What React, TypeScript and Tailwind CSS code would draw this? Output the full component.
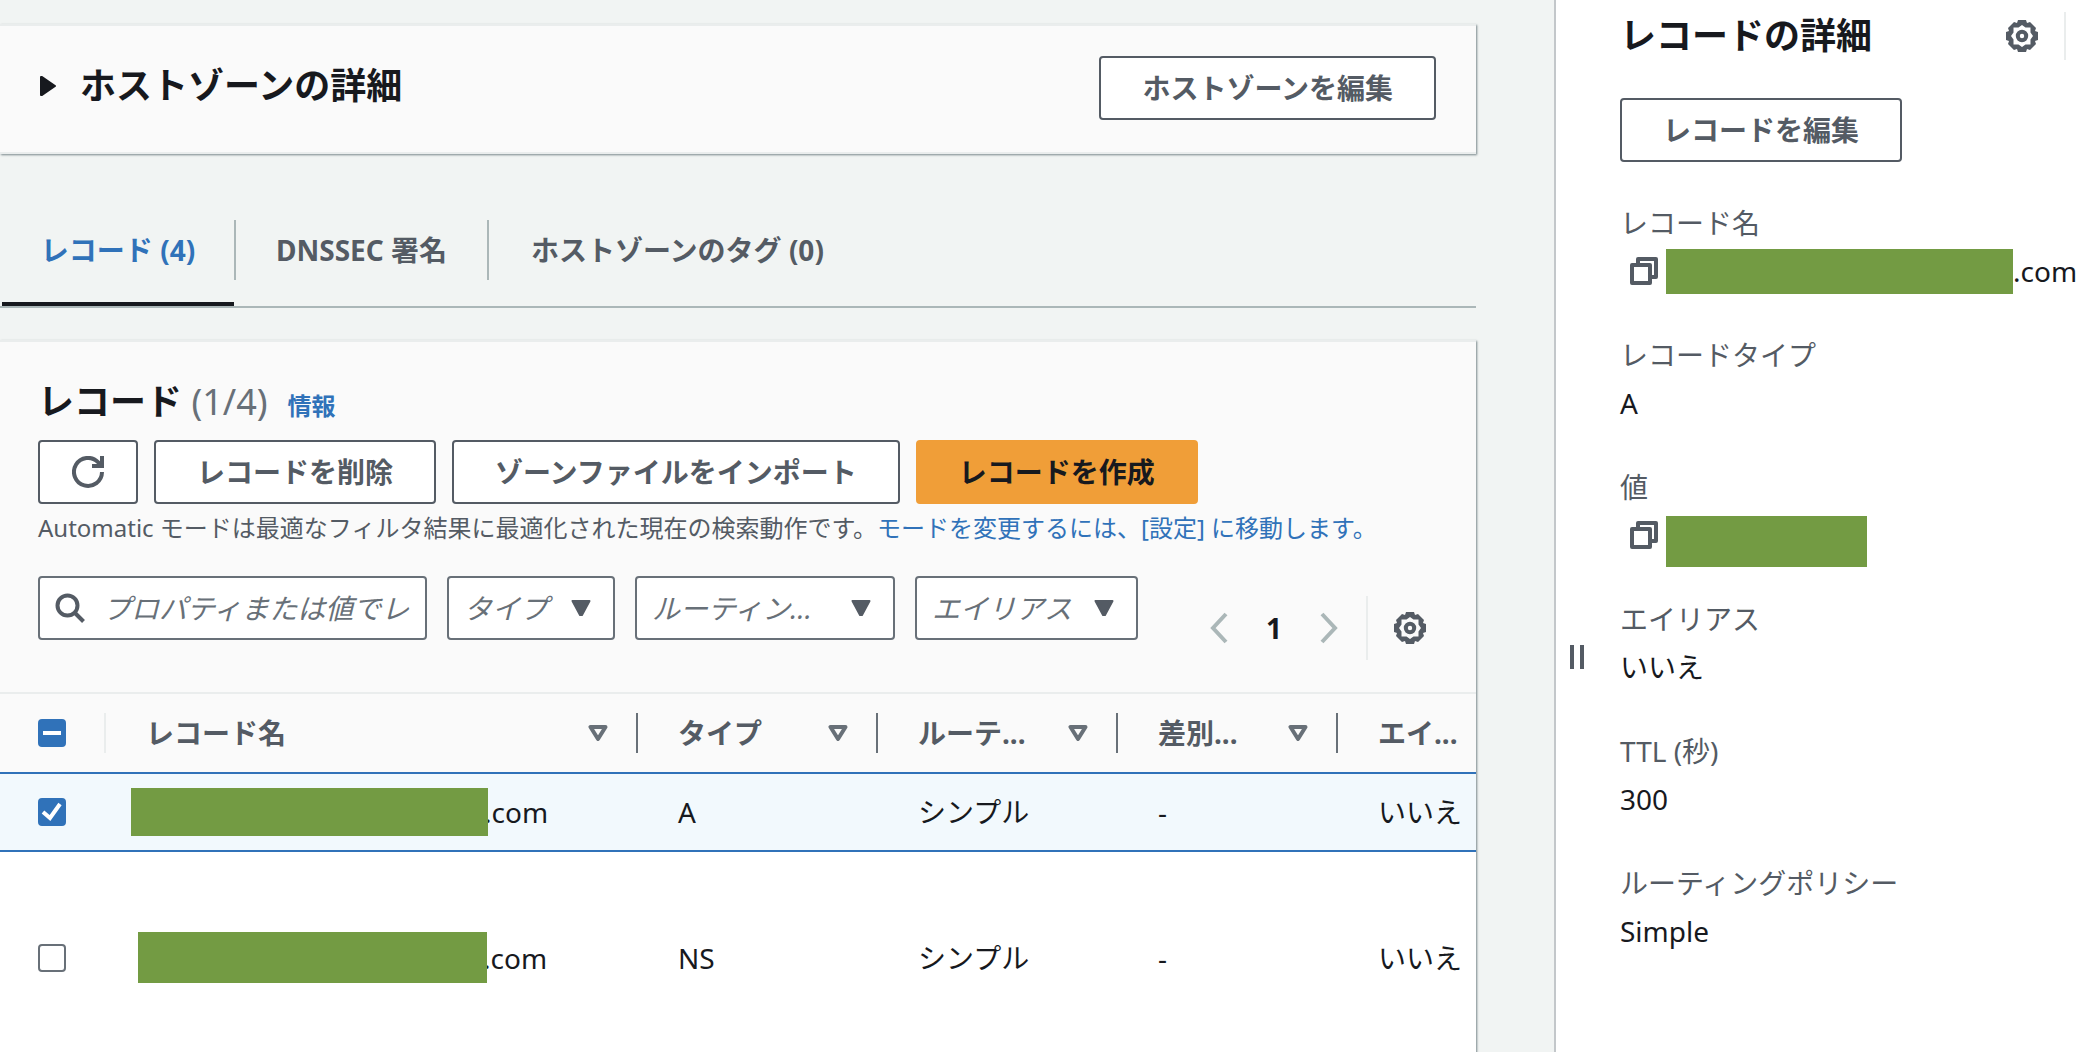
import type { ReactNode } from "react";

const font = "font-['Noto_Sans','Noto_Sans_CJK_JP',sans-serif]";

function Gear() {
  return (
    <svg viewBox="0 0 32 32" className="size-8" fill="#545b64">
      <path
        fillRule="evenodd"
        d="M12 0h8l1 3 3-1 6 6-1 3 3 1v8l-3 1 1 3-6 6-3-1-1 3h-8l-1-3-3 1-6-6 1-3-3-1v-8l3-1-1-3 6-6 3 1zM16 5l-3.500 2.500-5 0 0 5L5 16l2.500 3.500 0 5 5 0L16 27l3.500-2.500 5 0 0-5L27 16l-2.500-3.500 0-5-5 0z"
      />
      <circle cx="16" cy="16" r="4.200" fill="none" stroke="#545b64" strokeWidth="4" />
    </svg>
  );
}

function Caret() {
  return (
    <svg viewBox="0 0 20 16" className="h-4 w-5" fill="#545b64" stroke="#545b64" strokeWidth="2" strokeLinejoin="round">
      <path d="M1.500 1h17l-7.500 14h-2z" />
    </svg>
  );
}

function SortIcon() {
  return (
    <svg viewBox="0 0 20 16" className="h-4 w-5" fill="none" stroke="#687078" strokeWidth="4" strokeLinejoin="round">
      <path d="M2.500 2h15l-7.500 12z" />
    </svg>
  );
}

function CopyIcon() {
  return (
    <svg viewBox="0 0 28 28" className="size-7" fill="none" stroke="#545b64" strokeWidth="4" strokeLinejoin="round">
      <path d="M2 8h18v18H2z" />
      <path d="M8 8V2h18v18h-6" />
    </svg>
  );
}

function Button({ children, primary }: { children: ReactNode; primary?: boolean }) {
  return (
    <button
      type="button"
      className={
        primary
          ? "h-16 shrink-0 whitespace-nowrap rounded-[4px] border-2 border-[#f09e38] bg-[#f09e38] px-[41px] text-[28px] font-bold text-[#17191e]"
          : "h-16 shrink-0 whitespace-nowrap rounded-[4px] border-2 border-[#545b64] bg-white px-[41px] text-[28px] font-bold text-[#545b64]"
      }
    >
      {children}
    </button>
  );
}

function Filter({ label, width }: { label: string; width: string }) {
  return (
    <div className={`relative shrink-0 ${width}`}>
      <select
        aria-label={label}
        className="h-16 w-full appearance-none rounded-[4px] border-2 border-[#687078] bg-white pl-[15px] text-[28px] italic text-[#687078]"
      >
        <option>{label}</option>
      </select>
      <span className="pointer-events-none absolute inset-y-0 right-6 flex items-center">
        <Caret />
      </span>
    </div>
  );
}

function Check({ label, checked, mixed }: { label: string; checked?: boolean; mixed?: boolean }) {
  return (
    <span className="relative flex size-7">
      <input
        type="checkbox"
        aria-label={label}
        defaultChecked={checked}
        className="size-7 appearance-none rounded-[4px] border-2 border-[#687078] bg-white checked:border-[#3072b9] checked:bg-[#3072b9]"
      />
      {checked && (
        <svg viewBox="0 0 28 28" className="pointer-events-none absolute inset-0" fill="none" stroke="white" strokeWidth="4">
          <path d={mixed ? "M5 14h18" : "M5 14l7 6L22 6"} />
        </svg>
      )}
    </span>
  );
}

function HeaderCell({ label, last }: { label: string; last?: boolean }) {
  return (
    <th scope="col" className="h-20 p-0 font-bold">
      <div
        className={
          last
            ? "flex h-10 items-center pl-10"
            : "flex h-10 items-center justify-between border-r-2 border-[#687078] pr-7 pl-10"
        }
      >
        <span className="whitespace-nowrap">{label}</span>
        {!last && (
          <button type="button" aria-label={`${label} で並べ替え`}>
            <SortIcon />
          </button>
        )}
      </div>
    </th>
  );
}

function Field({ label, children }: { label: string; children: ReactNode }) {
  return (
    <div className="flex flex-col gap-1">
      <dt className="h-11 text-[28px] leading-[44px] text-[#545b64]">{label}</dt>
      <dd className="flex h-11 items-center text-[28px] leading-[44px]">{children}</dd>
    </div>
  );
}

function CopyButton() {
  return (
    <button type="button" aria-label="コピー" className="mr-2 ml-[10px] shrink-0">
      <CopyIcon />
    </button>
  );
}

const card = "border-y-2 border-[#eaeded] shadow-[1px_1px_2px_rgba(0,28,36,0.5)]";

export default function App() {
  return (
    <div className={`flex h-screen overflow-hidden bg-[#f1f4f3] text-[#17191e] ${font}`}>
      <main className="flex min-w-0 flex-1 flex-col overflow-hidden pt-6 pr-[78px]">
        <section className={`flex h-[130px] shrink-0 items-start justify-between bg-[#fafafa] pt-[30px] pr-10 pl-10 ${card}`}>
          <h2 className="text-[36px] leading-[60px] font-bold">
            <button type="button" className="flex items-center gap-6">
              <svg viewBox="0 0 16 20" className="h-5 w-4" fill="#17191e" stroke="#17191e" strokeWidth="2" strokeLinejoin="round">
                <path d="M1 1l1 0 13 9-13 9-1 0z" />
              </svg>
              ホストゾーンの詳細
            </button>
          </h2>
          <Button>ホストゾーンを編集</Button>
        </section>

        <div role="tablist" className="mt-[66px] flex h-[88px] shrink-0 border-b-2 border-[#abb7b8] pl-[2px] text-[28px] font-bold text-[#545b64]">
          <button type="button" role="tab" aria-selected="true" className="flex h-[86px] w-[232px] flex-col items-center border-b-4 border-[#17191e] text-[#3072b9]">
            <span className="leading-[60px]">レコード (4)</span>
          </button>
          <button type="button" role="tab" aria-selected="false" className="h-[60px] w-[255px] border-x-2 border-[#abb7b8]">
            DNSSEC 署名
          </button>
          <button type="button" role="tab" aria-selected="false" className="h-[60px] px-[42px]">
            ホストゾーンのタグ (0)
          </button>
        </div>

        <section className={`mt-8 flex flex-1 flex-col bg-white ${card}`}>
          <div className="shrink-0 bg-[#fafafa] px-[38px] pt-8">
            <div className="flex items-baseline">
              <h2 className="text-[36px] leading-[56px] font-bold">
                レコード <span className="font-normal text-[#687078]">(1/4)</span>
              </h2>
              <a href="#info" className="ml-5 text-[24px] font-bold text-[#3072b9]">
                情報
              </a>
            </div>
            <div className="mt-[10px] flex gap-4">
              <button type="button" aria-label="更新" className="flex h-16 w-[100px] shrink-0 items-center justify-center rounded-[4px] border-2 border-[#545b64] bg-white">
                <svg viewBox="0 0 32 32" className="size-8" fill="none" stroke="#545b64" strokeWidth="4">
                  <path d="M30 16a14 14 0 1 1-4-9.900l3 3" />
                  <path d="M30 0v10H20" />
                </svg>
              </button>
              <Button>レコードを削除</Button>
              <Button>ゾーンファイルをインポート</Button>
              <Button primary>レコードを作成</Button>
            </div>
            <p className="mt-1 text-[24px] leading-[40px] whitespace-nowrap text-[#545b64]">
              Automatic モードは最適なフィルタ結果に最適化された現在の検索動作です。
              <a href="#settings" className="text-[#3072b9]">
                モードを変更するには、[設定] に移動します。
              </a>
            </p>
            <div className="mt-7 flex h-[116px] items-start justify-between">
              <div className="flex items-start gap-5">
                <label className="flex h-16 w-[389px] items-center rounded-[4px] border-2 border-[#687078] bg-white pr-[14px] pl-[15px]">
                  <svg viewBox="0 0 30 30" className="size-[30px] shrink-0" fill="none" stroke="#545b64" strokeWidth="4">
                    <circle cx="12.500" cy="12.500" r="10" />
                    <path d="M19.500 19.500l9 9" />
                  </svg>
                  <input
                    type="text"
                    aria-label="レコードを検索"
                    placeholder="プロパティまたは値でレコードをフィルタリング"
                    className="ml-[18px] min-w-0 flex-1 text-[28px] italic outline-none placeholder:text-[#687078]"
                  />
                </label>
                <Filter label="タイプ" width="w-[168px]" />
                <Filter label="ルーティン..." width="w-[260px]" />
                <Filter label="エイリアス" width="w-[223px]" />
              </div>
              <div className="mt-5 mr-3 flex h-16 items-center">
                <button type="button" aria-label="前のページ">
                  <svg viewBox="0 0 18 32" className="h-8 w-[18px]" fill="none" stroke="#abb7b8" strokeWidth="4">
                    <path d="M16 2L3 16l13 14" />
                  </svg>
                </button>
                <button type="button" aria-current="page" className="w-[92px] text-[28px] font-bold">
                  1
                </button>
                <button type="button" aria-label="次のページ">
                  <svg viewBox="0 0 18 32" className="h-8 w-[18px]" fill="none" stroke="#abb7b8" strokeWidth="4">
                    <path d="M2 2l13 14L2 30" />
                  </svg>
                </button>
                <span className="ml-7 h-16 w-[2px] bg-[#eaeded]" />
                <button type="button" aria-label="設定" className="ml-[26px]">
                  <Gear />
                </button>
              </div>
            </div>
          </div>

          <table className="w-full shrink-0 table-fixed border-collapse text-left text-[28px]">
            <colgroup>
              <col className="w-[106px]" />
              <col />
              <col className="w-[240px]" />
              <col className="w-[240px]" />
              <col className="w-[220px]" />
              <col className="w-[138px]" />
            </colgroup>
            <thead className="border-t-2 border-[#eaeded] bg-[#fafafa] text-[#545b64]">
              <tr>
                <th scope="col" className="h-20 p-0">
                  <div className="flex h-10 items-center border-r-2 border-[#eaeded] pl-[38px]">
                    <Check label="すべて選択" checked mixed />
                  </div>
                </th>
                <HeaderCell label="レコード名" />
                <HeaderCell label="タイプ" />
                <HeaderCell label="ルーテ..." />
                <HeaderCell label="差別..." />
                <HeaderCell label="エイ..." last />
              </tr>
            </thead>
            <tbody>
              <tr className="h-[78px] border-y-2 border-[#3072b9] bg-[#f2f9fd]">
                <td className="p-0 pl-[38px]">
                  <Check label="A レコードを選択" checked />
                </td>
                <td className="p-0 pl-[25px]">
                  <div className="flex items-center">
                    <span className="z-10 -mr-1 h-12 w-[357px] bg-[#739b43]" />
                    .com
                  </div>
                </td>
                <td className="p-0 pl-10">A</td>
                <td className="p-0 pl-10">シンプル</td>
                <td className="p-0 pl-10">-</td>
                <td className="p-0 pl-10">いいえ</td>
              </tr>
              <tr className="h-[212px]">
                <td className="p-0 pl-[38px]">
                  <Check label="NS レコードを選択" />
                </td>
                <td className="p-0 pl-8">
                  <div className="flex items-center">
                    <span className="z-10 -mr-1 h-[51px] w-[349px] bg-[#739b43]" />
                    .com
                  </div>
                </td>
                <td className="p-0 pl-10">NS</td>
                <td className="p-0 pl-10">シンプル</td>
                <td className="p-0 pl-10">-</td>
                <td className="p-0 pl-10">いいえ</td>
              </tr>
            </tbody>
          </table>
        </section>
      </main>

      <aside className="flex w-[530px] shrink-0 border-l-2 border-[#c3c7ca] bg-white">
        <div role="separator" aria-orientation="vertical" className="flex w-16 shrink-0 items-center gap-[6px] pt-[262px] pl-[14px]">
          <span className="h-6 w-1 bg-[#545b64]" />
          <span className="h-6 w-1 bg-[#545b64]" />
        </div>
        <div className="min-w-0 flex-1 pt-2">
          <div className="flex items-center">
            <h2 className="flex-1 text-[36px] leading-[56px] font-bold">レコードの詳細</h2>
            <button type="button" aria-label="設定">
              <Gear />
            </button>
            <span className="mr-[18px] ml-[26px] h-12 w-[2px] bg-[#eaeded]" />
          </div>
          <div className="mt-[34px]">
            <Button>レコードを編集</Button>
          </div>
          <dl className="mt-[39px] flex flex-col gap-10">
            <Field label="レコード名">
              <CopyButton />
              <span className="h-[45px] w-[347px] shrink-0 bg-[#739b43]" />
              .com
            </Field>
            <Field label="レコードタイプ">A</Field>
            <Field label="値">
              <CopyButton />
              <span className="mt-3 h-[51px] w-[201px] shrink-0 bg-[#739b43]" />
            </Field>
            <Field label="エイリアス">いいえ</Field>
            <Field label="TTL (秒)">300</Field>
            <Field label="ルーティングポリシー">Simple</Field>
          </dl>
        </div>
      </aside>
    </div>
  );
}
